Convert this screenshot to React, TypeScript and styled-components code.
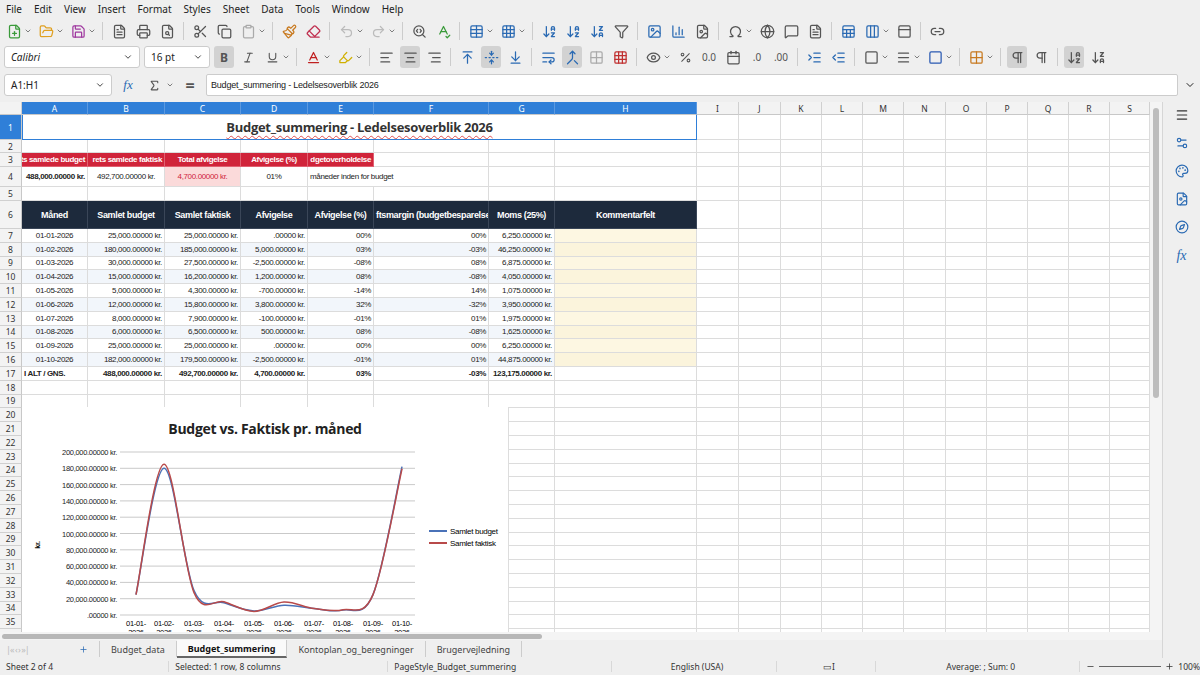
import React from 'react';
import styled, { createGlobalStyle, css } from 'styled-components';
import {
  FilePlus, FolderOpen, Save, FileText, Printer, FileSearch, Scissors, Copy, Clipboard, Paintbrush, Eraser,
  Undo2, Redo2, SearchCode, SpellCheck, Table, Grid3x3, ArrowDownAZ, ArrowDownZA, Filter, Image, BarChart3,
  Omega, Globe, MessageSquare, Sheet, Columns3, Square, Pilcrow, AlignLeft, AlignCenter, AlignRight,
  ChevronDown, Sigma, Percent, Calendar, Menu, Settings2, Compass, Palette, FileImage, Link2,
  Italic, Underline, Baseline, Highlighter, ArrowUpToLine, FoldVertical, ArrowDownToLine, WrapText,
  Merge, Grid2x2, Eye, IndentIncrease, IndentDecrease, PanelTop, Plus, Minus
} from 'lucide-react';

const GlobalStyle = createGlobalStyle`
  body { margin: 0; background: #efefef; font-family: "Noto Sans", "Liberation Sans", sans-serif; overflow: hidden; }
`;

const Frame = styled.div`
  width: 1200px; height: 675px; display: flex; flex-direction: column; background: #efefef; color: #222;
`;
const MenuBar = styled.div`
  height: 18px; display: flex; align-items: center; gap: 12px; padding-left: 6px; font-size: 10px;
`;
const ToolRow = styled.div`
  height: 26px; display: flex; align-items: center; gap: 4px; padding-left: 4px;
`;
const Tool = styled.span<{ $on?: boolean; $color?: string }>`
  width: 20px; height: 22px; display: inline-flex; align-items: center; justify-content: center;
  border-radius: 3px; color: ${p => p.$color || '#555'};
  ${p => p.$on && css`background: #d2d2d2;`}
`;
const Drop = styled(ChevronDown)`
  width: 8px; height: 8px; margin-left: -4px; color: #444;
`;
const Sep = styled.span`
  width: 1px; height: 18px; background: #ccc; margin: 0 2px;
`;
const Combo = styled.div<{ $w: number; $italic?: boolean }>`
  width: ${p => p.$w}px; height: 22px; background: #fff; border: 1px solid #ccc; border-radius: 3px;
  display: flex; align-items: center; justify-content: space-between; padding: 0 6px; box-sizing: border-box;
  font-size: 10px; font-style: ${p => (p.$italic ? 'italic' : 'normal')};
`;
const FormulaRow = styled.div`
  height: 26px; display: flex; align-items: center; gap: 6px; padding: 0 4px; margin-top: 2px; margin-bottom: 4px;
`;
const FormulaInput = styled.div`
  flex: 1; height: 20px; background: #fff; border: 1px solid #ccc; border-radius: 2px;
  display: flex; align-items: center; padding-left: 4px; font-size: 9px; letter-spacing: -0.2px;
  font-family: "Liberation Sans", sans-serif;
`;
const Main = styled.div`
  flex: 1; display: flex; min-height: 0;
`;
const SheetArea = styled.div`
  width: 1162px; display: flex; flex-direction: column;
`;
const GridWrap = styled.div`
  height: 532px; display: flex; position: relative; overflow: hidden; background: #fff;
`;
const Sidebar = styled.div`
  width: 38px; display: flex; flex-direction: column; align-items: center; gap: 14px; padding-top: 6px;
  border-left: 1px solid #d6d6d6; color: #2a6ab3;
`;
const VScroll = styled.div`
  width: 12px; background: #f4f4f4; position: relative;
`;
const Thumb = styled.div`
  position: absolute; left: 3px; top: 6px; width: 6px; height: 290px; background: #bdbdbd; border-radius: 3px;
`;

const cols = [66, 77, 76, 67, 66, 115, 66, 142, 42, 42, 41, 41, 41, 42, 41, 41, 41, 41, 40];
const letters = 'ABCDEFGHIJKLMNOPQRS'.split('');
const template = `22px ${cols.map(c => c + 'px').join(' ')}`;

const Grid = styled.div`
  display: grid; grid-template-columns: ${template}; width: 1150px; align-content: start;
  font-family: "Liberation Sans", sans-serif; font-size: 8px; letter-spacing: -0.35px;
`;
const ColHead = styled.div<{ $sel?: boolean }>`
  height: 13px; display: flex; align-items: center; justify-content: center; font-size: 8.5px;
  font-family: "Noto Sans", sans-serif; letter-spacing: 0;
  background: ${p => (p.$sel ? '#2f7fd8' : '#f3f3f3')}; color: ${p => (p.$sel ? '#fff' : '#333')};
  border-right: 1px solid ${p => (p.$sel ? '#5b99e0' : '#d0d0d0')}; border-bottom: 1px solid #c8c8c8;
  box-sizing: border-box;
`;
const RowHead = styled.div<{ $h: number; $sel?: boolean }>`
  height: ${p => p.$h}px; display: flex; align-items: center; justify-content: center; font-size: 8.5px;
  font-family: "Noto Sans", sans-serif; letter-spacing: 0;
  background: ${p => (p.$sel ? '#2f7fd8' : '#f3f3f3')}; color: ${p => (p.$sel ? '#fff' : '#333')};
  border-bottom: 1px solid #d0d0d0; border-right: 1px solid #c8c8c8; box-sizing: border-box;
`;
type Kind = 'plain' | 'red' | 'pink' | 'dark' | 'alt' | 'note' | 'noteAlt' | 'title';
const Cell = styled.div<{ $h: number; $span?: number; $k?: Kind; $align?: string; $bold?: boolean }>`
  height: ${p => p.$h}px; grid-column: span ${p => p.$span || 1}; box-sizing: border-box;
  display: flex; align-items: center; justify-content: ${p => p.$align || 'flex-start'};
  padding: 0 2px; white-space: nowrap; overflow: hidden;
  border-right: 1px solid #dcdcdc; border-bottom: 1px solid #dcdcdc;
  font-weight: ${p => (p.$bold ? 700 : 400)};
  ${p => p.$k === 'red' && css`background: #d0243a; color: #fff; font-weight: 700; border-color: #e06070;`}
  ${p => p.$k === 'pink' && css`background: #fbdada; color: #d0243a;`}
  ${p => p.$k === 'dark' && css`background: #1d2a3c; color: #fff; font-weight: 700; border-color: #3a4658; font-size: 9px;`}
  ${p => p.$k === 'alt' && css`background: #f2f6fb;`}
  ${p => p.$k === 'note' && css`background: #fdf7e2;`}
  ${p => p.$k === 'noteAlt' && css`background: #fbf4dc;`}
  ${p => p.$k === 'title' && css`
    font-family: "Open Sans", "Noto Sans", sans-serif; font-size: 13px; font-weight: 700; color: #333; letter-spacing: -0.3px;
    border: 1px solid #2f7fd8; border-top: none;
    text-decoration: underline wavy #e05050; text-decoration-thickness: 1px; text-underline-offset: 3px;
  `}
`;

const ChartBox = styled.div`
  position: absolute; left: 22px; top: 305px; width: 486px; height: 227px; background: #fff;
  border-right: 1px solid #ddd;
`;

const BottomBar = styled.div`
  height: 8px; background: #f4f4f4; position: relative;
`;
const HThumb = styled.div`
  position: absolute; left: 2px; top: 2px; width: 540px; height: 5px; background: #b8b8b8; border-radius: 3px;
`;
const Tabs = styled.div`
  height: 18px; display: flex; align-items: center; font-size: 9px; gap: 0; padding-left: 6px; color: #444;
`;
const Tab = styled.div<{ $on?: boolean }>`
  padding: 0 11px; height: 16px; display: flex; align-items: center; border-right: 1px solid #ccc;
  ${p => p.$on && css`font-weight: 700; color: #111; border-bottom: 2px solid #666; background: #fafafa;`}
`;
const Status = styled.div`
  height: 17px; display: flex; align-items: center; font-size: 8.5px; color: #333; background: #efefef;
`;
const StatusItem = styled.div<{ $w: number; $center?: boolean }>`
  width: ${p => p.$w}px; padding-left: 6px; box-sizing: border-box; border-right: 1px solid #d8d8d8;
  text-align: ${p => (p.$center ? 'center' : 'left')};
`;

type Row = { cells: { t?: string; span?: number; k?: Kind; a?: string; b?: boolean }[]; h: number };

const data = [
  ['01-01-2026', '25,000.00000 kr.', '25,000.00000 kr.', '.00000 kr.', '00%', '00%', '6,250.00000 kr.'],
  ['01-02-2026', '180,000.00000 kr.', '185,000.00000 kr.', '5,000.00000 kr.', '03%', '-03%', '46,250.00000 kr.'],
  ['01-03-2026', '30,000.00000 kr.', '27,500.00000 kr.', '-2,500.00000 kr.', '-08%', '08%', '6,875.00000 kr.'],
  ['01-04-2026', '15,000.00000 kr.', '16,200.00000 kr.', '1,200.00000 kr.', '08%', '-08%', '4,050.00000 kr.'],
  ['01-05-2026', '5,000.00000 kr.', '4,300.00000 kr.', '-700.00000 kr.', '-14%', '14%', '1,075.00000 kr.'],
  ['01-06-2026', '12,000.00000 kr.', '15,800.00000 kr.', '3,800.00000 kr.', '32%', '-32%', '3,950.00000 kr.'],
  ['01-07-2026', '8,000.00000 kr.', '7,900.00000 kr.', '-100.00000 kr.', '-01%', '01%', '1,975.00000 kr.'],
  ['01-08-2026', '6,000.00000 kr.', '6,500.00000 kr.', '500.00000 kr.', '08%', '-08%', '1,625.00000 kr.'],
  ['01-09-2026', '25,000.00000 kr.', '25,000.00000 kr.', '.00000 kr.', '00%', '00%', '6,250.00000 kr.'],
  ['01-10-2026', '182,000.00000 kr.', '179,500.00000 kr.', '-2,500.00000 kr.', '-01%', '01%', '44,875.00000 kr.'],
];

const empty = (n: number, k?: Kind) => Array.from({ length: n }, () => ({ k }));

function buildRows(): Row[] {
  const rows: Row[] = [];
  rows.push({ h: 25, cells: [{ t: 'Budget_summering - Ledelsesoverblik 2026', span: 8, k: 'title', a: 'center' }, ...empty(11)] });
  rows.push({ h: 13, cells: empty(19) });
  rows.push({ h: 14, cells: [
    { t: 'ets samlede budget', k: 'red', a: 'flex-end' }, { t: 'rets samlede faktisk', k: 'red', a: 'flex-end' },
    { t: 'Total afvigelse', k: 'red', a: 'center' }, { t: 'Afvigelse (%)', k: 'red', a: 'center' },
    { t: 'dgetoverholdelse', k: 'red', a: 'flex-end' }, ...empty(14) ] });
  rows.push({ h: 20, cells: [
    { t: '488,000.00000 kr.', a: 'flex-end', b: true }, { t: '492,700.00000 kr.', a: 'center' },
    { t: '4,700.00000 kr.', k: 'pink', a: 'center' }, { t: '01%', a: 'center' },
    { t: 'måneder inden for budget', span: 2 }, ...empty(13) ] });
  rows.push({ h: 14, cells: empty(19) });
  rows.push({ h: 28, cells: [
    ...['Måned', 'Samlet budget', 'Samlet faktisk', 'Afvigelse', 'Afvigelse (%)', 'ftsmargin (budgetbesparelse)', 'Moms (25%)', 'Kommentarfelt']
      .map(t => ({ t, k: 'dark' as Kind, a: t.startsWith('fts') ? 'flex-start' : 'center' })), ...empty(11) ] });
  data.forEach((d, i) => {
    const alt = i % 2 === 0 ? undefined : 'alt';
    rows.push({ h: 13.8, cells: [
      { t: d[0], a: 'center', k: alt as Kind }, ...d.slice(1).map(t => ({ t, a: 'flex-end', k: alt as Kind })),
      { k: alt ? 'noteAlt' : 'note' }, ...empty(11) ] });
  });
  rows.push({ h: 13.8, cells: [
    { t: 'I ALT / GNS.', b: true }, { t: '488,000.00000 kr.', a: 'flex-end', b: true },
    { t: '492,700.00000 kr.', a: 'flex-end', b: true }, { t: '4,700.00000 kr.', a: 'flex-end', b: true },
    { t: '03%', a: 'flex-end', b: true }, { t: '-03%', a: 'flex-end', b: true },
    { t: '123,175.00000 kr.', a: 'flex-end', b: true }, ...empty(12) ] });
  for (let r = 18; r <= 36; r++) rows.push({ h: 13.8, cells: empty(19) });
  return rows;
}

const xs = [136, 164, 194, 224, 254, 284, 314, 343, 373, 402];
const budget = [25000, 180000, 30000, 15000, 5000, 12000, 8000, 6000, 25000, 182000];
const actual = [25000, 185000, 27500, 16200, 4300, 15800, 7900, 6500, 25000, 179500];
const Y0 = 208, YS = 163 / 200000;

function smooth(vals: number[], ox: number) {
  const p = vals.map((v, i) => [xs[i] - ox, Y0 - v * YS]);
  let d = `M${p[0][0]},${p[0][1]}`;
  for (let i = 0; i < p.length - 1; i++) {
    const p0 = p[Math.max(0, i - 1)], p1 = p[i], p2 = p[i + 1], p3 = p[Math.min(p.length - 1, i + 2)];
    const c1 = [p1[0] + (p2[0] - p0[0]) / 6, p1[1] + (p2[1] - p0[1]) / 6];
    const c2 = [p2[0] - (p3[0] - p1[0]) / 6, p2[1] - (p3[1] - p1[1]) / 6];
    d += ` C${c1[0]},${c1[1]} ${c2[0]},${c2[1]} ${p2[0]},${p2[1]}`;
  }
  return d;
}

function Chart() {
  const ox = 22;
  const ticks = Array.from({ length: 11 }, (_, i) => i * 20000);
  const fmt = (v: number) => (v === 0 ? '.00000 kr.' : v.toLocaleString('en-US') + '.00000 kr.');
  return (
    <ChartBox>
      <svg width="486" height="227" style={{ fontFamily: '"Liberation Sans", sans-serif', letterSpacing: '-0.3px' }}>
        <text x="243" y="27" textAnchor="middle" fontSize="14" fontWeight="700" fill="#222" fontFamily="Open Sans, sans-serif">Budget vs. Faktisk pr. måned</text>
        {ticks.map(v => (
          <g key={v}>
            <line x1={98} x2={393} y1={Y0 - v * YS} y2={Y0 - v * YS} stroke="#bbb" strokeWidth="0.8" />
            <text x={95} y={Y0 - v * YS + 3} textAnchor="end" fontSize="7.5" fill="#222">{fmt(v)}</text>
          </g>
        ))}
        <text x="18" y="138" fontSize="7" fontWeight="700" transform="rotate(-90 18 138)" textAnchor="middle">kr.</text>
        {xs.map((x, i) => (
          <g key={x}>
            <text x={x - ox} y={219} textAnchor="middle" fontSize="7.5">{`01-${String(i + 1).padStart(2, '0')}-`}</text>
            <text x={x - ox} y={228} textAnchor="middle" fontSize="7.5">2026</text>
          </g>
        ))}
        <path d={smooth(budget, ox)} fill="none" stroke="#4a72b8" strokeWidth="1.5" />
        <path d={smooth(actual, ox)} fill="none" stroke="#b84a4a" strokeWidth="1.5" />
        <line x1="407" x2="425" y1="124" y2="124" stroke="#4a72b8" strokeWidth="2" />
        <text x="428" y="127" fontSize="8">Samlet budget</text>
        <line x1="407" x2="425" y1="136" y2="136" stroke="#b84a4a" strokeWidth="2" />
        <text x="428" y="139" fontSize="8">Samlet faktisk</text>
      </svg>
    </ChartBox>
  );
}

const I = 15;

export default function App() {
  const rows = buildRows();
  return (
    <Frame>
      <GlobalStyle />
      <MenuBar>
        {['File', 'Edit', 'View', 'Insert', 'Format', 'Styles', 'Sheet', 'Data', 'Tools', 'Window', 'Help'].map(m => <span key={m}>{m}</span>)}
      </MenuBar>
      <ToolRow>
        <Tool $color="#3a9a3a"><FilePlus size={I} /></Tool><Drop />
        <Tool $color="#e0a020"><FolderOpen size={I} /></Tool><Drop />
        <Tool $color="#a03aa0"><Save size={I} /></Tool><Drop /><Sep />
        <Tool><FileText size={I} /></Tool><Tool><Printer size={I} /></Tool><Tool><FileSearch size={I} /></Tool><Sep />
        <Tool><Scissors size={I} /></Tool><Tool><Copy size={I} /></Tool><Tool $color="#aaa"><Clipboard size={I} /></Tool><Drop /><Sep />
        <Tool $color="#c87a20"><Paintbrush size={I} /></Tool><Tool $color="#c03050"><Eraser size={I} /></Tool><Sep />
        <Tool $color="#bbb"><Undo2 size={I} /></Tool><Drop /><Tool $color="#bbb"><Redo2 size={I} /></Tool><Drop /><Sep />
        <Tool><SearchCode size={I} /></Tool><Tool $color="#3a9a3a"><SpellCheck size={I} /></Tool><Sep />
        <Tool $color="#2a6ab3"><Table size={I} /></Tool><Drop /><Tool $color="#2a6ab3"><Grid3x3 size={I} /></Tool><Drop /><Sep />
        <Tool $color="#2a6ab3"><ArrowDownAZ size={I} /></Tool><Tool $color="#2a6ab3"><ArrowDownAZ size={I} /></Tool><Tool $color="#2a6ab3"><ArrowDownZA size={I} /></Tool><Tool><Filter size={I} /></Tool><Sep />
        <Tool $color="#2a6ab3"><Image size={I} /></Tool><Tool $color="#2a6ab3"><BarChart3 size={I} /></Tool><Tool><FileImage size={I} /></Tool><Sep />
        <Tool><Omega size={I} /></Tool><Drop /><Tool><Globe size={I} /></Tool><Tool><MessageSquare size={I} /></Tool><Tool><FileText size={I} /></Tool><Sep />
        <Tool $color="#2a6ab3"><Sheet size={I} /></Tool><Tool $color="#2a6ab3"><Columns3 size={I} /></Tool><Drop /><Tool><PanelTop size={I} /></Tool><Sep />
        <Tool><Link2 size={I} /></Tool>
      </ToolRow>
      <ToolRow>
        <Combo $w={136} $italic>Calibri<ChevronDown size={10} /></Combo>
        <Combo $w={66}>16 pt<ChevronDown size={10} /></Combo>
        <Tool $on><b style={{ fontSize: 12 }}>B</b></Tool><Tool><Italic size={13} /></Tool><Tool><Underline size={13} /></Tool><Drop /><Sep />
        <Tool $color="#c02020"><Baseline size={I} /></Tool><Drop /><Tool $color="#d0b000"><Highlighter size={I} /></Tool><Drop /><Sep />
        <Tool><AlignLeft size={I} /></Tool><Tool $on><AlignCenter size={I} /></Tool><Tool><AlignRight size={I} /></Tool><Sep />
        <Tool $color="#2a6ab3"><ArrowUpToLine size={I} /></Tool><Tool $on $color="#2a6ab3"><FoldVertical size={I} /></Tool><Tool $color="#2a6ab3"><ArrowDownToLine size={I} /></Tool><Sep />
        <Tool $color="#2a6ab3"><WrapText size={I} /></Tool><Tool $on $color="#2a6ab3"><Merge size={I} /></Tool><Tool $color="#aaa"><Grid2x2 size={I} /></Tool><Tool $color="#c03030"><Grid3x3 size={I} /></Tool><Sep />
        <Tool><Eye size={I} /></Tool><Drop /><Tool><Percent size={13} /></Tool><Tool><span style={{ fontSize: 10 }}>0.0</span></Tool><Tool><Calendar size={I} /></Tool><Tool><span style={{ fontSize: 10 }}>.0</span></Tool><Tool><span style={{ fontSize: 10 }}>.00</span></Tool><Sep />
        <Tool $color="#2a6ab3"><IndentIncrease size={I} /></Tool><Tool $color="#2a6ab3"><IndentDecrease size={I} /></Tool><Sep />
        <Tool><Square size={I} /></Tool><Drop /><Tool><Menu size={I} /></Tool><Drop /><Tool $color="#2a5ab3"><Square size={I} /></Tool><Drop /><Sep />
        <Tool $color="#c87a20"><Grid2x2 size={I} /></Tool><Drop /><Sep />
        <Tool $on><Pilcrow size={I} /></Tool><Tool><Pilcrow size={I} /></Tool><Sep /><Tool $on><ArrowDownAZ size={I} /></Tool><Tool><ArrowDownZA size={I} /></Tool>
      </ToolRow>
      <FormulaRow>
        <Combo $w={108}>A1:H1<ChevronDown size={10} /></Combo>
        <Tool $color="#2a6ab3"><i style={{ fontFamily: 'Liberation Serif, serif', fontSize: 13 }}>fx</i></Tool>
        <Tool><Sigma size={13} /></Tool><Drop /><Tool><b>=</b></Tool>
        <FormulaInput>Budget_summering - Ledelsesoverblik 2026</FormulaInput>
        <ChevronDown size={12} />
      </FormulaRow>
      <Main>
        <SheetArea>
          <GridWrap>
            <Grid>
              <ColHead />
              {letters.map((l, i) => <ColHead key={l} $sel={i < 8}>{l}</ColHead>)}
              {rows.map((r, ri) => (
                <React.Fragment key={ri}>
                  <RowHead $h={r.h} $sel={ri === 0}>{ri + 1}</RowHead>
                  {r.cells.map((c, ci) => (
                    <Cell key={ci} $h={r.h} $span={c.span} $k={c.k} $align={c.a} $bold={c.b}>{c.t}</Cell>
                  ))}
                </React.Fragment>
              ))}
            </Grid>
            <Chart />
            <VScroll><Thumb /></VScroll>
          </GridWrap>
          <BottomBar><HThumb /></BottomBar>
          <Tabs>
            <span style={{ color: '#bbb', letterSpacing: -1, width: 62 }}>|‹‹ ‹ › ››|</span>
            <Tab><Plus size={9} color="#2a6ab3" /></Tab>
            <Tab>Budget_data</Tab><Tab $on>Budget_summering</Tab><Tab>Kontoplan_og_beregninger</Tab><Tab>Brugervejledning</Tab>
          </Tabs>
        </SheetArea>
        <Sidebar>
          <Menu size={14} color="#333" /><Settings2 size={14} /><Palette size={14} /><FileImage size={14} /><Compass size={14} />
          <i style={{ fontFamily: 'Liberation Serif, serif', fontSize: 14 }}>fx</i>
        </Sidebar>
      </Main>
      <Status>
        <StatusItem $w={170}>Sheet 2 of 4</StatusItem>
        <StatusItem $w={220}>Selected: 1 row, 8 columns</StatusItem>
        <StatusItem $w={225}>PageStyle_Budget_summering</StatusItem>
        <StatusItem $w={165} $center>English (USA)</StatusItem>
        <StatusItem $w={100} $center>▭I</StatusItem>
        <StatusItem $w={205} $center>Average: ; Sum: 0</StatusItem>
        <div style={{ display: 'flex', alignItems: 'center', gap: 4, paddingLeft: 6 }}>
          <Minus size={9} /><span style={{ width: 62, height: 1, background: '#666' }} /><Plus size={9} /><span>100%</span>
        </div>
      </Status>
    </Frame>
  );
}
